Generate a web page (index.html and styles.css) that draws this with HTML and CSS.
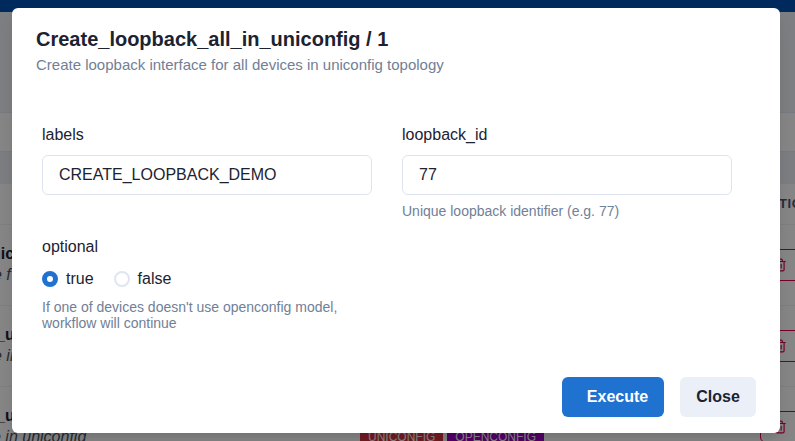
FILE: index.html
```html
<!DOCTYPE html>
<html lang="en">
<head>
<meta charset="utf-8">
<title>Create_loopback_all_in_uniconfig</title>
<link rel="stylesheet" href="styles.css">
</head>
<body>
<svg class="sprite" aria-hidden="true">
  <symbol id="trash" viewBox="0 0 24 24"><path d="M3 6h18M19 6v14a2 2 0 0 1-2 2H7a2 2 0 0 1-2-2V6m3 0V4a2 2 0 0 1 2-2h4a2 2 0 0 1 2 2v2M10 11v6M14 11v6" fill="none" stroke="currentColor" stroke-width="2" stroke-linecap="round" stroke-linejoin="round"/></symbol>
</svg>
<div class="page">
  <div class="navbar"></div>
  <div class="hero"></div>
  <div class="tabs"></div>
  <div class="band"></div>
  <div class="thead"><span>TIO</span></div>
  <div class="row">
    <div class="info"><b class="name name-first">nic</b><i class="desc">e f</i></div>
    <span class="delete"><svg><use href="#trash"/></svg></span>
  </div>
  <div class="row">
    <div class="info"><b class="name">_u</b><i class="desc">e in</i></div>
    <span class="delete"><svg><use href="#trash"/></svg></span>
  </div>
  <div class="row">
    <div class="info"><b class="name">_u</b><i class="desc desc-last">e in uniconfig</i></div>
    <div class="tags"><span class="tag red">UNICONFIG</span><span class="tag purple">OPENCONFIG</span></div>
    <span class="delete"><svg><use href="#trash"/></svg></span>
  </div>
</div>
<div class="overlay">
  <section class="modal">
    <header>
      <h1>Create_loopback_all_in_uniconfig / 1</h1>
      <p>Create loopback interface for all devices in uniconfig topology</p>
    </header>
    <form class="fields">
      <div class="field">
        <label for="labels">labels</label>
        <input id="labels" value="CREATE_LOOPBACK_DEMO">
      </div>
      <div class="field">
        <label for="loopback">loopback_id</label>
        <input id="loopback" value="77">
        <p class="help">Unique loopback identifier (e.g. 77)</p>
      </div>
      <div class="field">
        <label>optional</label>
        <div class="radios">
          <span class="radio"><span class="dot checked"></span>true</span>
          <span class="radio"><span class="dot"></span>false</span>
        </div>
        <p class="help">If one of devices doesn't use openconfig model, workflow will continue</p>
      </div>
    </form>
    <footer>
      <button class="execute">Execute</button>
      <button class="close">Close</button>
    </footer>
  </section>
</div>
</body>
</html>
```
FILE: styles.css
```css
* { box-sizing: border-box; margin: 0; }
body {
  height: 441px;
  overflow: hidden;
  font: 16px/24px "Liberation Sans", Arial, sans-serif;
  color: #1d2230;
}
.sprite { display: none; }
.page { height: 441px; overflow: hidden; background: #fff; }
.navbar { height: 12px; background: #0051b4; }
.hero { height: 101px; background: #edf2f7; border-bottom: 1px solid #e2e8f0; }
.tabs { height: 39px; border-bottom: 1px solid #e2e8f0; }
.band { height: 32px; background: #ebf0f8; }
.thead {
  display: flex;
  align-items: center;
  height: 41px;
  padding-left: 779px;
  border-bottom: 1px solid #edf2f7;
  color: #4a5578;
  font-size: 13px;
  font-weight: 700;
  letter-spacing: .6px;
}
.row {
  display: flex;
  align-items: flex-start;
  height: 81px;
  padding-top: 17px;
  border-bottom: 1px solid #edf2f7;
  white-space: nowrap;
}
.info { display: flex; flex-direction: column; flex: 0 0 360px; }
.name { height: 21px; margin-left: -4px; }
.name-first { margin-left: -9px; }
.desc { margin-left: -7px; color: #4a5568; }
.desc-last { margin-left: -8px; }
.tags { display: flex; gap: 4px; padding-top: 24px; }
.tag { height: 20px; padding: 0 8px; font-size: 12px; line-height: 18px; color: #fff; }
.red { background: #dc3545; }
.purple { background: #a000c8; }
.delete {
  display: flex;
  flex: 0 0 60px;
  align-items: center;
  height: 32px;
  margin: 7px 0 0 auto;
  margin-right: -25px;
  padding-left: 12px;
  border: 1px solid #e2004b;
  border-radius: 6px;
  color: #e2004b;
}
.delete svg { width: 14px; height: 14px; }
.overlay {
  position: absolute;
  inset: 0;
  padding: 8px 15px 8px 12px;
  background: rgba(0, 0, 0, .48);
}
.modal {
  display: flex;
  flex-direction: column;
  height: 425px;
  border-radius: 6px;
  background: #fff;
  box-shadow: 0 10px 15px -3px rgba(0, 0, 0, .1), 0 4px 6px -2px rgba(0, 0, 0, .05);
}
header { padding: 16px 24px 0; }
h1 { font-size: 20px; line-height: 30px; }
header p { font-size: 15px; line-height: 22px; color: #718096; }
.fields {
  display: grid;
  grid-template-columns: 330px 330px;
  gap: 16px 30px;
  padding: 47px 30px 0;
}
.field label { display: block; margin-bottom: 8px; }
input {
  display: block;
  width: 100%;
  height: 40px;
  padding: 0 16px;
  border: 1px solid #dde4f0;
  border-radius: 6px;
  background: #fff;
  color: inherit;
  font: inherit;
}
.help { margin-top: 8px; font-size: 14px; line-height: 16px; color: #718096; }
.radios { display: flex; gap: 20px; }
.radio { display: flex; align-items: center; gap: 8px; }
.dot { width: 16px; height: 16px; border: 2px solid #dfe5f2; border-radius: 50%; }
.checked { border: 5px solid #1f72d0; }
footer { display: flex; justify-content: flex-end; gap: 16px; margin-top: auto; padding: 0 24px 16px; }
button { height: 40px; border: 0; border-radius: 6px; font: 700 16px/24px "Liberation Sans", Arial, sans-serif; }
.execute { width: 102px; padding: 0 0 0 9px; background: #1f72d0; color: #fff; }
.close { width: 76px; padding: 0; background: #ebf0f8; color: #1d2230; }
```
